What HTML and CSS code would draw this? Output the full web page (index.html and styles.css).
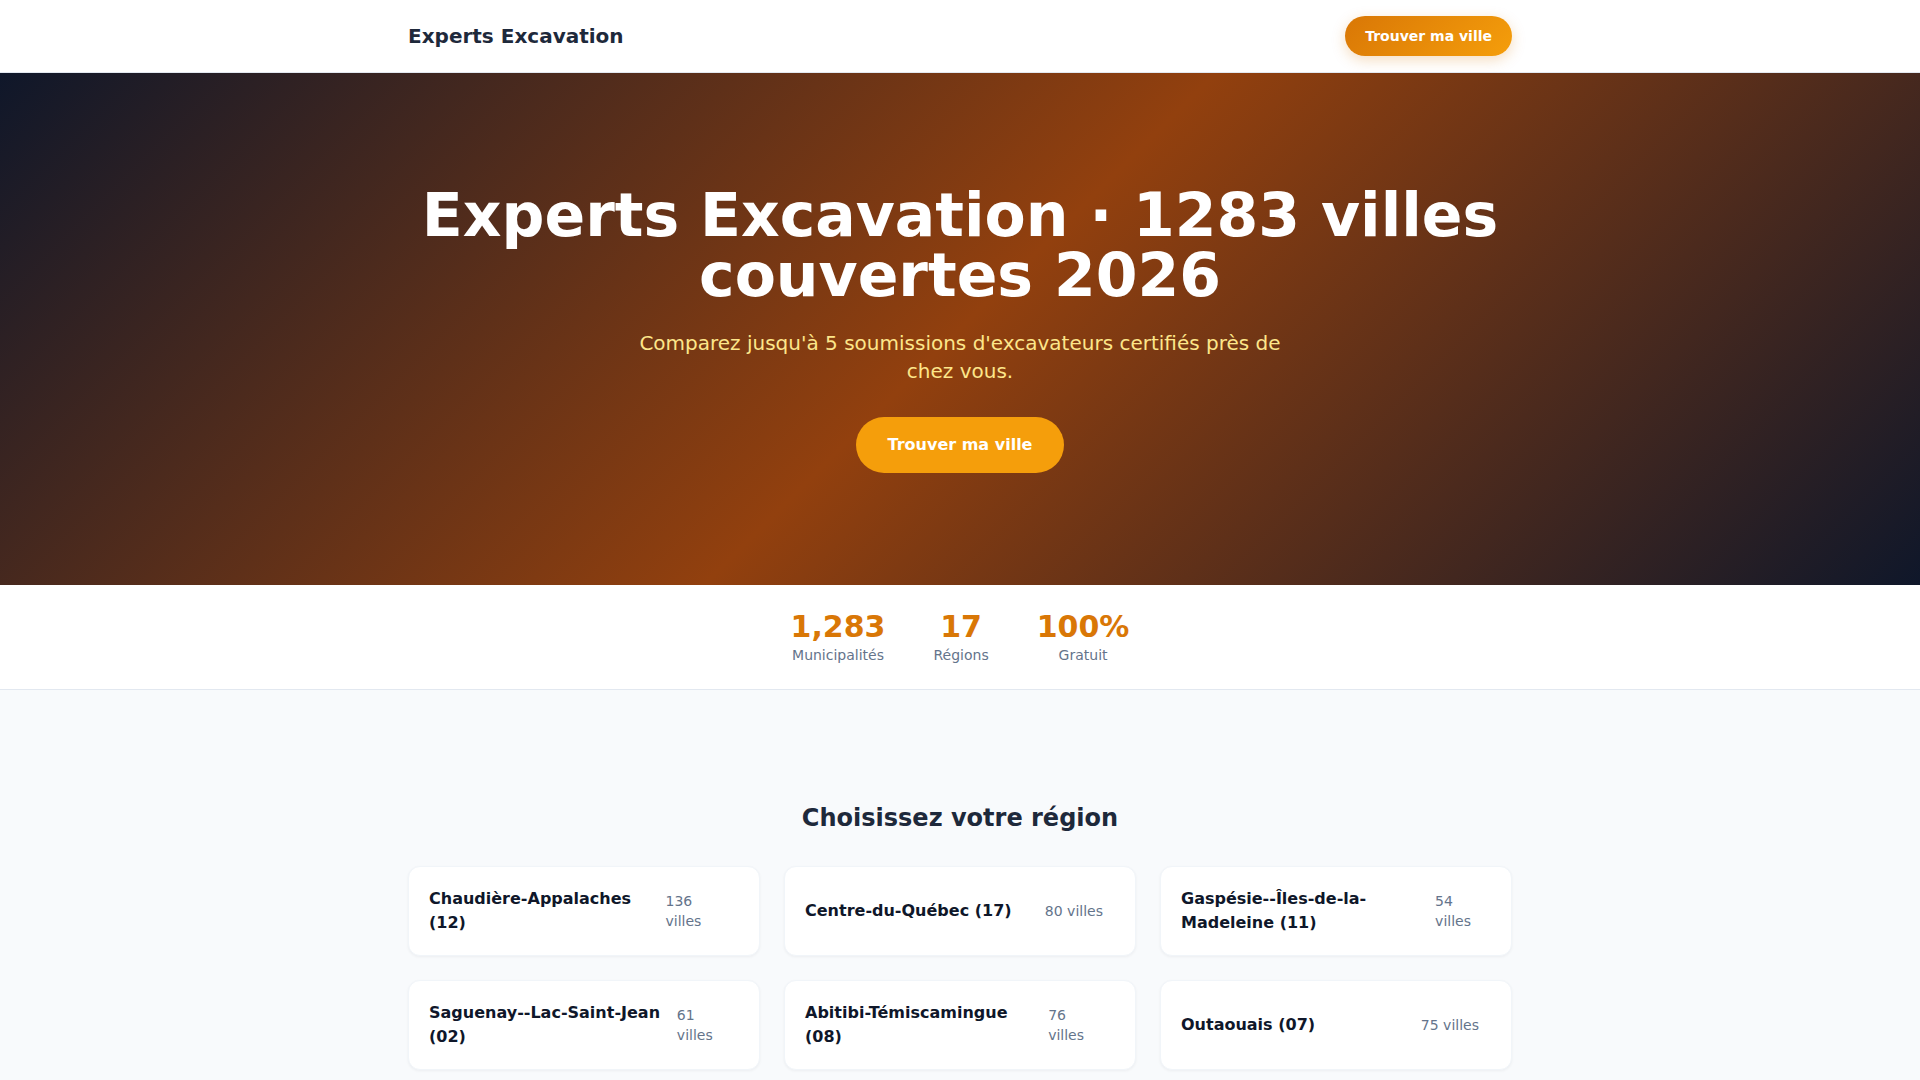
FILE: index.html
```html
<!DOCTYPE html>
<html lang="fr">
<head>
<meta charset="utf-8">
<title>Experts Excavation</title>
<link rel="stylesheet" href="styles.css">
</head>
<body>
<header class="site-header">
  <div class="container header-inner">
    <a class="logo" href="#">Experts Excavation</a>
    <a class="btn btn-header" href="#">Trouver ma ville</a>
  </div>
</header>

<section class="hero">
  <div class="container hero-inner">
    <h1 class="hero-title">Experts Excavation · 1283 villes couvertes 2026</h1>
    <p class="hero-sub">Comparez jusqu'à 5 soumissions d'excavateurs certifiés près de chez vous.</p>
    <a class="btn btn-hero" href="#">Trouver ma ville</a>
  </div>
</section>

<section class="stats">
  <div class="stats-inner">
    <div class="stat"><div class="stat-num">1,283</div><div class="stat-label">Municipalités</div></div>
    <div class="stat"><div class="stat-num">17</div><div class="stat-label">Régions</div></div>
    <div class="stat"><div class="stat-num">100%</div><div class="stat-label">Gratuit</div></div>
  </div>
</section>

<section class="regions">
  <div class="container">
    <h2 class="section-title">Choisissez votre région</h2>
    <div class="region-grid">
      <a class="region-card" href="#"><span class="region-name">Chaudière-Appalaches (12)</span><span class="region-count">136 villes</span></a>
      <a class="region-card" href="#"><span class="region-name">Centre-du-Québec (17)</span><span class="region-count">80 villes</span></a>
      <a class="region-card" href="#"><span class="region-name">Gaspésie--Îles-de-la-Madeleine (11)</span><span class="region-count">54 villes</span></a>
      <a class="region-card" href="#"><span class="region-name">Saguenay--Lac-Saint-Jean (02)</span><span class="region-count">61 villes</span></a>
      <a class="region-card" href="#"><span class="region-name">Abitibi-Témiscamingue (08)</span><span class="region-count">76 villes</span></a>
      <a class="region-card" href="#"><span class="region-name">Outaouais (07)</span><span class="region-count">75 villes</span></a>
    </div>
  </div>
</section>
</body>
</html>
```

FILE: styles.css
```css
* { box-sizing: border-box; }

html, body {
  margin: 0;
  padding: 0;
}

body {
  font-family: "DejaVu Sans", "Noto Sans", sans-serif;
  color: #1e293b;
  background: #f8fafc;
}

a { text-decoration: none; color: inherit; }

.container {
  max-width: 1152px;
  margin: 0 auto;
  padding: 0 24px;
}

/* Header */
.site-header {
  background: #ffffff;
  border-bottom: 1px solid #e2e8f0;
  height: 73px;
}

.header-inner {
  height: 100%;
  display: flex;
  align-items: center;
  justify-content: space-between;
}

.logo {
  font-size: 20px;
  font-weight: 700;
  color: #1e293b;
  line-height: 28px;
}

.btn {
  display: inline-block;
  font-weight: 700;
  color: #ffffff;
  border-radius: 9999px;
}

.btn-header {
  font-size: 14px;
  line-height: 20px;
  padding: 10px 20px;
  background: linear-gradient(135deg, #d97706, #f59e0b);
  box-shadow: 0 4px 14px rgba(217, 119, 6, 0.25);
}

/* Hero */
.hero {
  background: linear-gradient(135deg, #0f172a 0%, #92400e 50%, #0f172a 100%);
  color: #ffffff;
  padding: 112px 0 112px;
}

.hero-inner {
  display: flex;
  flex-direction: column;
  align-items: center;
  text-align: center;
}

.hero-title {
  margin: 0 0 24px;
  font-size: 60px;
  line-height: 60px;
  font-weight: 700;
  color: #ffffff;
}

.hero-sub {
  margin: 0 0 32px;
  max-width: 672px;
  font-size: 20px;
  line-height: 28px;
  color: #fde68a;
}

.btn-hero {
  font-size: 16px;
  line-height: 24px;
  padding: 16px 32px;
  background: #f59e0b;
}

/* Stats */
.stats {
  background: #ffffff;
  border-bottom: 1px solid #e2e8f0;
  padding: 24px 0;
}

.stats-inner {
  display: flex;
  justify-content: center;
  gap: 48px;
  text-align: center;
}

.stat-num {
  font-size: 30px;
  line-height: 36px;
  font-weight: 700;
  color: #d97706;
}

.stat-label {
  font-size: 14px;
  line-height: 20px;
  color: #64748b;
}

/* Regions */
.regions {
  background: #f8fafc;
  padding: 112px 0 80px;
}

.section-title {
  margin: 0 0 32px;
  text-align: center;
  font-size: 24px;
  line-height: 32px;
  font-weight: 700;
  color: #1e293b;
}

.region-grid {
  display: grid;
  grid-template-columns: repeat(3, 1fr);
  gap: 24px;
}

.region-card {
  display: flex;
  align-items: center;
  justify-content: space-between;
  background: #ffffff;
  border: 1px solid #f1f5f9;
  border-radius: 12px;
  padding: 20px;
  box-shadow: 0 1px 3px rgba(15, 23, 42, 0.05);
}

.region-name {
  font-size: 16px;
  line-height: 24px;
  font-weight: 700;
  color: #0f172a;
}

.region-count {
  font-size: 14px;
  line-height: 20px;
  color: #64748b;
  padding: 4px 12px;
}
```
